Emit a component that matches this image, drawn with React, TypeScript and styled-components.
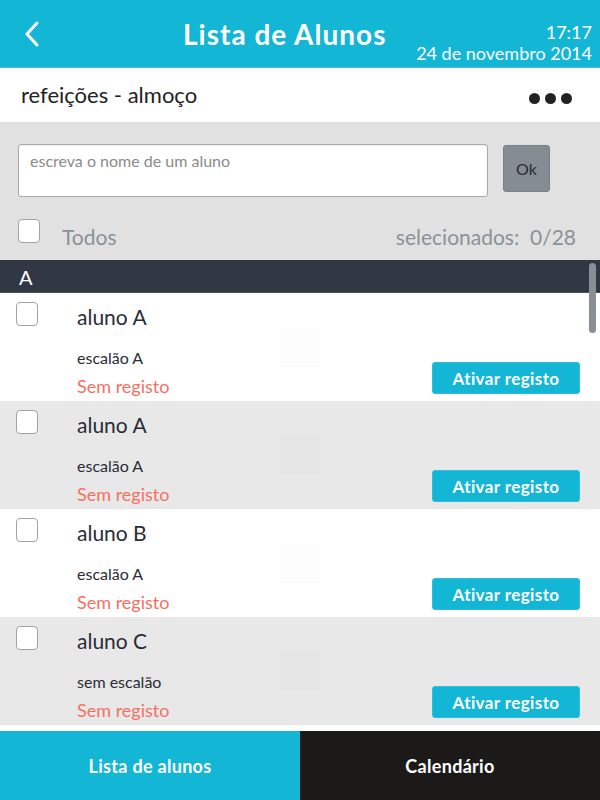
import React from "react";
import styled, { createGlobalStyle } from "styled-components";

const GlobalStyle = createGlobalStyle`
  html, body { margin: 0; padding: 0; }
  body { font-family: Lato, "Open Sans", sans-serif; background: #fff; }
  * { box-sizing: border-box; }
`;

const Screen = styled.div`
  width: 600px;
  height: 800px;
  display: flex;
  flex-direction: column;
  overflow: hidden;
  position: relative;
`;

const Header = styled.header`
  height: 68px;
  background: #14b6d5;
  border-bottom: 1px solid #4fc6de;
  display: grid;
  grid-template-columns: 159px 1fr auto;
  align-items: center;
  color: #fff;
  padding: 0 8px 0 24px;
`;

const BackButton = styled.div`
  display: flex;
  align-items: center;
`;

const Title = styled.h1`
  margin: 0;
  font-size: 28px;
  font-weight: 700;
  letter-spacing: 1px;
`;

const Clock = styled.div`
  justify-self: end;
  text-align: right;
  font-size: 18px;
  line-height: 21px;
  padding-top: 18px;
`;

const SubHeader = styled.div`
  height: 54px;
  display: flex;
  align-items: center;
  justify-content: space-between;
  padding: 0 28px 2px 21px;
  font-size: 22px;
  color: #222;
`;

const Dots = styled.div`
  display: flex;
  gap: 5px;
  padding-top: 8px;
`;

const Dot = styled.span`
  width: 11px;
  height: 11px;
  border-radius: 50%;
  background: #222;
`;

const Toolbar = styled.div`
  background: #e1e1e1;
  padding: 22px 24px 11px 18px;
  display: flex;
  flex-direction: column;
  gap: 22px;
`;

const SearchRow = styled.div`
  display: flex;
  gap: 15px;
  align-items: flex-start;
`;

const SearchBox = styled.div`
  width: 470px;
  height: 53px;
  background: #fff;
  border: 1px solid #a9a9a9;
  border-radius: 3px;
  padding: 6px 11px;
  font-size: 16px;
  color: #8a8a8a;
  box-shadow: inset 0 1px 2px rgba(0, 0, 0, 0.08);
`;

const OkButton = styled.div`
  width: 47px;
  height: 47px;
  margin-top: 1px;
  background: #868c94;
  border: 1px solid #7a8087;
  border-radius: 3px;
  display: flex;
  align-items: center;
  justify-content: center;
  font-size: 16px;
  color: #2b2b2b;
`;

const SelectRow = styled.div`
  display: flex;
  align-items: flex-start;
  justify-content: space-between;
  font-size: 21px;
  line-height: 25px;
  color: #8a9196;
`;

const SelectAll = styled.div`
  display: flex;
  align-items: flex-start;
  gap: 22px;
`;

const LowText = styled.span`
  padding-top: 5px;
`;

const Checkbox = styled.span`
  width: 22px;
  height: 24px;
  background: #fff;
  border: 1px solid #9ea3a8;
  border-radius: 4px;
  flex-shrink: 0;
`;

const ListArea = styled.div`
  flex: 1;
  overflow: hidden;
  position: relative;
  background: #fff;
`;

const SectionHeader = styled.div`
  height: 33px;
  background: #313844;
  border-bottom: 1px solid #4a515c;
  color: #fff;
  font-size: 20px;
  padding: 5px 19px 0;
`;

const Row = styled.div<{ $alt: boolean }>`
  height: 108px;
  background: ${(p) => (p.$alt ? "#e8e8e8" : "#fff")};
  display: grid;
  grid-template-columns: 61px 1fr auto;
  padding: 9px 20px 0 16px;
  position: relative;
`;

const Info = styled.div`
  display: flex;
  flex-direction: column;
`;

const Name = styled.div`
  font-size: 21px;
  color: #2a2d35;
  margin-top: 2px;
  height: 44px;
`;

const Level = styled.div`
  font-size: 16px;
  color: #2a2d35;
`;

const Status = styled.div`
  font-size: 18px;
  color: #f7705f;
  margin-top: 8px;
`;

const Photo = styled.div<{ $alt: boolean }>`
  position: absolute;
  left: 280px;
  top: 35px;
  width: 40px;
  height: 39px;
  background: ${(p) => (p.$alt ? "#e6e6e6" : "#fcfcfc")};
`;

const ActivateButton = styled.div`
  align-self: start;
  margin-top: 60px;
  width: 148px;
  height: 32px;
  background: #14b6d5;
  border: 1px solid #2cbfdb;
  border-radius: 3px;
  color: #fff;
  font-size: 17px;
  font-weight: 700;
  letter-spacing: 0.4px;
  display: flex;
  align-items: center;
  justify-content: center;
`;

const Scrollbar = styled.div`
  position: absolute;
  right: 4px;
  top: 3px;
  width: 7px;
  height: 70px;
  border-radius: 4px;
  background: #8a8f96;
`;

const TabBar = styled.nav`
  margin-top: 5px;
  height: 69px;
  display: grid;
  grid-template-columns: 1fr 1fr;
`;

const Tab = styled.div<{ $active: boolean }>`
  background: ${(p) => (p.$active ? "#14b6d5" : "#1b1a19")};
  color: #fff;
  font-size: 18px;
  font-weight: 700;
  letter-spacing: 0.3px;
  display: flex;
  align-items: center;
  justify-content: center;
`;

const students = [
  { name: "aluno A", level: "escalão A" },
  { name: "aluno A", level: "escalão A" },
  { name: "aluno B", level: "escalão A" },
  { name: "aluno C", level: "sem escalão" },
];

export default function App() {
  return (
    <>
      <GlobalStyle />
      <Screen>
        <Header>
          <BackButton>
            <svg width="16" height="26" viewBox="0 0 16 26">
              <path d="M13 2 L3 13 L13 24" fill="none" stroke="#fff" strokeWidth="3" strokeLinecap="round" strokeLinejoin="round" />
            </svg>
          </BackButton>
          <Title>Lista de Alunos</Title>
          <Clock>
            <div>17:17</div>
            <div>24 de novembro 2014</div>
          </Clock>
        </Header>
        <SubHeader>
          <span>refeições - almoço</span>
          <Dots>
            <Dot />
            <Dot />
            <Dot />
          </Dots>
        </SubHeader>
        <Toolbar>
          <SearchRow>
            <SearchBox>escreva o nome de um aluno</SearchBox>
            <OkButton>Ok</OkButton>
          </SearchRow>
          <SelectRow>
            <SelectAll>
              <Checkbox />
              <LowText>Todos</LowText>
            </SelectAll>
            <LowText>selecionados:&nbsp; 0/28</LowText>
          </SelectRow>
        </Toolbar>
        <ListArea>
          <SectionHeader>A</SectionHeader>
          {students.map((s, i) => (
            <Row key={i} $alt={i % 2 === 1}>
              <Checkbox />
              <Info>
                <Name>{s.name}</Name>
                <Level>{s.level}</Level>
                <Status>Sem registo</Status>
              </Info>
              <Photo $alt={i % 2 === 1} />
              <ActivateButton>Ativar registo</ActivateButton>
            </Row>
          ))}
          <Scrollbar />
        </ListArea>
        <TabBar>
          <Tab $active>Lista de alunos</Tab>
          <Tab $active={false}>Calendário</Tab>
        </TabBar>
      </Screen>
    </>
  );
}
